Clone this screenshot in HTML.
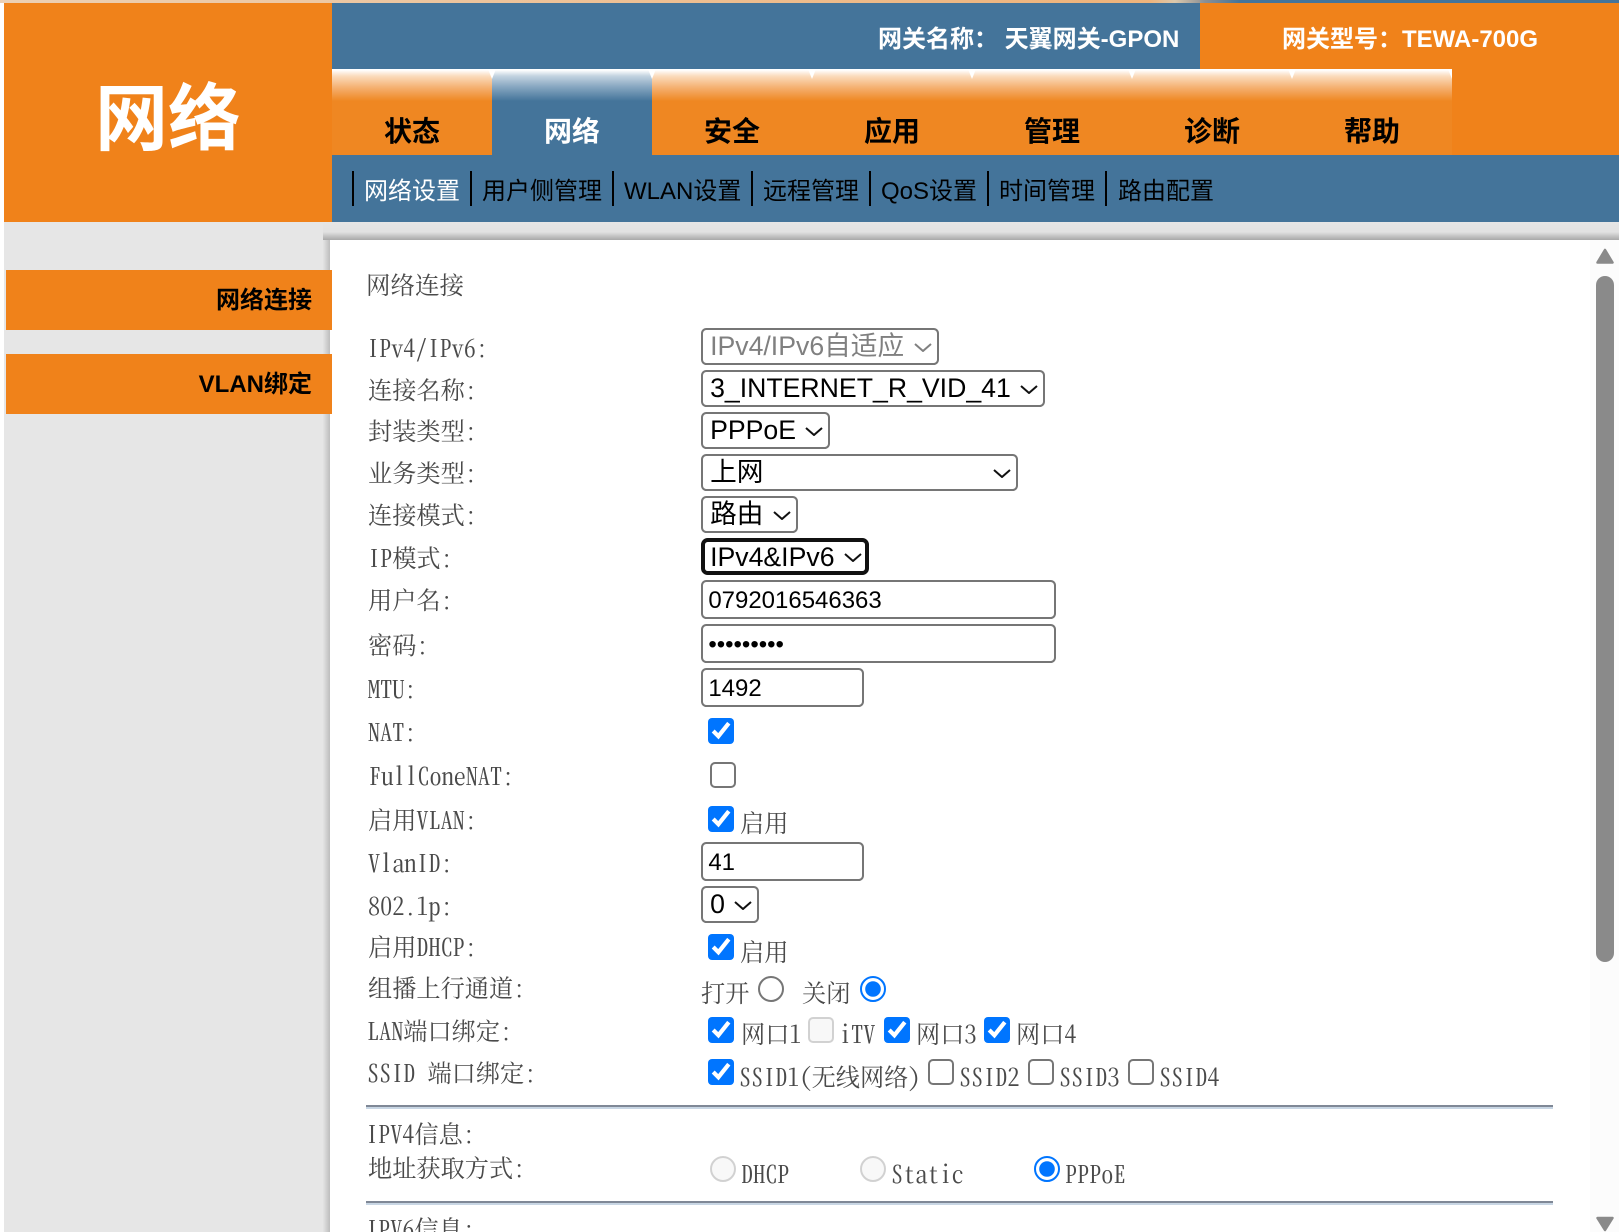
<!DOCTYPE html>
<html lang="zh"><head><meta charset="utf-8"><title>网络连接</title>
<style>
html,body{margin:0;padding:0;background:#fff;width:1619px;height:1232px;overflow:hidden}
#p{width:1619px;height:1232px;position:relative;overflow:hidden;font-family:"Liberation Sans","Noto Sans CJK SC",sans-serif}
.a{position:absolute}
.t{position:absolute;white-space:pre;line-height:30px}
.h{font-weight:700;font-size:24px;color:#fff}
.tab{position:absolute;top:69px;width:160px;height:86px;background:linear-gradient(#fff 0,#fff 1px,#fbdcbd 7px,#f5b274 18px,#ef8722 32px,#ef8722 100%);text-align:center;font-weight:700;font-size:28px;line-height:40px;color:#000}
.tab span{position:absolute;left:0;right:0;top:43px}
.n{position:absolute;top:69px}
.sep{position:absolute;top:171px;height:35px;width:2px;background:#000}
.sub{font-size:24px;color:#000}
.side{position:absolute;left:6px;width:326px;height:60px;background:#f0821a;color:#000;font-weight:700;font-size:24px;text-align:right;box-sizing:border-box;padding-right:20px;line-height:62px}
.l{position:absolute;white-space:pre;line-height:30px;font-family:"Noto Serif CJK SC",serif;font-feature-settings:"hwid";font-size:24.2px;color:#4a4a4a}
.f{position:absolute;left:701px}
select,input[type=text],input[type=password]{zoom:1.3333;display:block;margin:0;box-sizing:border-box;background:#fff;color:#000;border:1.6px solid #767676;border-radius:4px;font-family:"Liberation Sans","Noto Sans CJK SC",sans-serif;outline:0}
select{-webkit-appearance:none;appearance:none;font-size:20px;height:27.75px;padding:0 0 0 5.3px}
input[type=text],input[type=password]{font-size:18px;height:29.25px;padding:2px 4px 0 4px}
.ch{position:absolute;right:7px;top:15px;pointer-events:none}
.c{position:absolute;margin:0;zoom:2}
</style></head><body><div id="p">

<div class="a" style="left:0;top:0;width:1619px;height:3px;background:linear-gradient(90deg,#ecd0b4 0,#efb47c 1100px,#efb47c 1150px,#dcc8ac 1175px,#8b8f94 1205px,#44749a 1240px,#44749a 100%)"></div>
<div class="a" style="left:4px;top:3px;width:328px;height:219px;background:#f0821a"></div>
<div class="a" style="left:332px;top:3px;width:868px;height:66px;background:#44749a"></div>
<div class="a" style="left:1200px;top:3px;width:419px;height:152px;background:#f0821a"></div>
<div class="a" style="left:332px;top:155px;width:1287px;height:67px;background:#44749a"></div>
<div class="t" style="left:95px;top:77px;font-size:73px;line-height:86px;font-weight:700;color:#fff">网络</div>
<div class="t h" style="left:878px;top:25px">网关名称&#xFF1A; 天翼网关-GPON</div>
<div class="t h" style="left:1282px;top:25px">网关型号&#xFF1A;TEWA-700G</div>

<div class="tab" style="left:332px"><span>状态</span></div>
<div class="tab" style="left:492px;background:linear-gradient(#fff 0,#fff 1px,#c3d3e0 7px,#86a6c0 18px,#44749a 32px,#44749a 100%);color:#fff"><span>网络</span></div>
<div class="tab" style="left:652px"><span>安全</span></div>
<div class="tab" style="left:812px"><span>应用</span></div>
<div class="tab" style="left:972px"><span>管理</span></div>
<div class="tab" style="left:1132px"><span>诊断</span></div>
<div class="tab" style="left:1292px"><span>帮助</span></div>
<svg class="n" style="left:488px" width="8" height="10"><path d="M0 0H8L4 10Z" fill="#fff"/></svg>
<svg class="n" style="left:648px" width="8" height="10"><path d="M0 0H8L4 10Z" fill="#fff"/></svg>
<svg class="n" style="left:808px" width="8" height="10"><path d="M0 0H8L4 10Z" fill="#fff"/></svg>
<svg class="n" style="left:968px" width="8" height="10"><path d="M0 0H8L4 10Z" fill="#fff"/></svg>
<svg class="n" style="left:1128px" width="8" height="10"><path d="M0 0H8L4 10Z" fill="#fff"/></svg>
<svg class="n" style="left:1288px" width="8" height="10"><path d="M0 0H8L4 10Z" fill="#fff"/></svg>
<svg class="n" style="left:1448px" width="4" height="10"><path d="M0 0H4V10Z" fill="#fff"/></svg>

<div class="sep" style="left:352px"></div><div class="sep" style="left:470px"></div><div class="sep" style="left:612px"></div><div class="sep" style="left:751px"></div><div class="sep" style="left:869px"></div><div class="sep" style="left:987px"></div><div class="sep" style="left:1105px"></div>
<div class="t sub" style="left:364px;top:177px;color:#fff">网络设置</div>
<div class="t sub" style="left:482px;top:177px">用户侧管理</div>
<div class="t sub" style="left:624px;top:177px">WLAN设置</div>
<div class="t sub" style="left:763px;top:177px">远程管理</div>
<div class="t sub" style="left:881px;top:177px">QoS设置</div>
<div class="t sub" style="left:999px;top:177px">时间管理</div>
<div class="t sub" style="left:1118px;top:177px">路由配置</div>

<div class="a" style="left:4px;top:222px;width:319px;height:1010px;background:#e6e6e6"></div>
<div class="a" style="left:323px;top:240px;width:7px;height:992px;background:linear-gradient(90deg,#e4e4e4,#bdbdbd)"></div>
<div class="a" style="left:323px;top:222px;width:1296px;height:18px;background:linear-gradient(#e6e6e6 0,#e2e2e2 55%,#a8a8a8 100%)"></div>
<div class="side" style="top:270px">网络连接</div>
<div class="side" style="top:354px">VLAN绑定</div>

<div class="a" style="left:1590px;top:240px;width:29px;height:992px;background:#fcfcfc"></div>
<svg class="a" style="left:1596px;top:248px" width="18" height="16"><path d="M9 2 L16.5 14.5 H1.5 Z" fill="#8a8a8a" stroke="#8a8a8a" stroke-width="2.5" stroke-linejoin="round"/></svg>
<div class="a" style="left:1596px;top:276px;width:18px;height:686px;background:#8a8a8a;border-radius:9px"></div>
<svg class="a" style="left:1596px;top:1216px" width="18" height="16"><path d="M1.5 2 H16.5 L9 14 Z" fill="#8a8a8a" stroke="#8a8a8a" stroke-width="2.5" stroke-linejoin="round"/></svg>

<div class="l" style="left:366px;top:270px;font-size:24.5px">网络连接</div>
<div class="l" style="left:367px;top:332px">IPv4/IPv6:</div>
<div class="l" style="left:368px;top:374px">连接名称:</div>
<div class="l" style="left:368px;top:415px">封装类型:</div>
<div class="l" style="left:368px;top:457px">业务类型:</div>
<div class="l" style="left:368px;top:499px">连接模式:</div>
<div class="l" style="left:368px;top:542px">IP模式:</div>
<div class="l" style="left:368px;top:584px">用户名:</div>
<div class="l" style="left:368px;top:629px">密码:</div>
<div class="l" style="left:368px;top:673px">MTU:</div>
<div class="l" style="left:368px;top:716px">NAT:</div>
<div class="l" style="left:369px;top:760px">FullConeNAT:</div>
<div class="l" style="left:368px;top:804px">启用VLAN:</div>
<div class="l" style="left:368px;top:847px">VlanID:</div>
<div class="l" style="left:368px;top:890px">802.1p:</div>
<div class="l" style="left:368px;top:931px">启用DHCP:</div>
<div class="l" style="left:368px;top:972px">组播上行通道:</div>
<div class="l" style="left:367px;top:1015px">LAN端口绑定:</div>
<div class="l" style="left:367px;top:1057px">SSID 端口绑定:</div>
<div class="l" style="left:366px;top:1118px">IPV4信息:</div>
<div class="l" style="left:368px;top:1152px">地址获取方式:</div>
<div class="l" style="left:366px;top:1213px">IPV6信息:</div>

<div class="f" style="top:328px"><select disabled style="width:178.5px;color:#808080;background:#fff;opacity:1"><option>IPv4/IPv6自适应</option></select><svg class="ch" width="18" height="9"><path d="M1 1 L9 8 L17 1" fill="none" stroke="#808080" stroke-width="2"/></svg></div>
<div class="f" style="top:370px"><select style="width:258px"><option>3_INTERNET_R_VID_41</option></select><svg class="ch" width="18" height="9"><path d="M1 1 L9 8 L17 1" fill="none" stroke="#111" stroke-width="2"/></svg></div>
<div class="f" style="top:412px"><select style="width:96.7px"><option>PPPoE</option></select><svg class="ch" width="18" height="9"><path d="M1 1 L9 8 L17 1" fill="none" stroke="#111" stroke-width="2"/></svg></div>
<div class="f" style="top:454px"><select style="width:238px"><option>上网</option></select><svg class="ch" width="18" height="9"><path d="M1 1 L9 8 L17 1" fill="none" stroke="#111" stroke-width="2"/></svg></div>
<div class="f" style="top:496px"><select style="width:72.7px"><option>路由</option></select><svg class="ch" width="18" height="9"><path d="M1 1 L9 8 L17 1" fill="none" stroke="#111" stroke-width="2"/></svg></div>
<div class="f" style="top:538px"><select style="width:126px;border:3.1px solid #111;border-radius:5px;padding-left:3.8px"><option>IPv4&amp;IPv6</option></select><svg class="ch" width="18" height="9"><path d="M1 1 L9 8 L17 1" fill="none" stroke="#111" stroke-width="2"/></svg></div>
<div class="f" style="top:580px"><input type="text" value="0792016546363" style="width:266px"></div>
<div class="f" style="top:624px"><input type="password" value="123456789" style="width:266px"></div>
<div class="f" style="top:668px"><input type="text" value="1492" style="width:122px"></div>
<div class="f" style="top:842px"><input type="text" value="41" style="width:122px"></div>
<div class="f" style="top:886px"><select style="width:43.5px"><option>0</option></select><svg class="ch" width="18" height="9"><path d="M1 1 L9 8 L17 1" fill="none" stroke="#111" stroke-width="2"/></svg></div>

<input class="c" type="checkbox" checked style="left:354px;top:359px">
<input class="c" type="checkbox" style="left:355px;top:381px">
<input class="c" type="checkbox" checked style="left:354px;top:403px">
<div class="l" style="left:740px;top:807px">启用</div>
<input class="c" type="checkbox" checked style="left:354px;top:467px">
<div class="l" style="left:740px;top:936px">启用</div>

<div class="l" style="left:701px;top:977px">打开</div>
<input class="c" type="radio" name="g" style="left:379px;top:488px">
<div class="l" style="left:802px;top:977px">关闭</div>
<input class="c" type="radio" name="g" checked style="left:430px;top:488px">

<input class="c" type="checkbox" checked style="left:354px;top:508.5px">
<div class="l" style="left:741px;top:1018px">网口1</div>
<input class="c" type="checkbox" disabled style="left:404px;top:508.5px">
<div class="l" style="left:839px;top:1018px">iTV</div>
<input class="c" type="checkbox" checked style="left:442px;top:508.5px">
<div class="l" style="left:916px;top:1018px">网口3</div>
<input class="c" type="checkbox" checked style="left:492px;top:508.5px">
<div class="l" style="left:1016px;top:1018px">网口4</div>

<input class="c" type="checkbox" checked style="left:354px;top:529.5px">
<div class="l" style="left:739px;top:1061px">SSID1(无线网络)</div>
<input class="c" type="checkbox" style="left:464px;top:529.5px">
<div class="l" style="left:959px;top:1061px">SSID2</div>
<input class="c" type="checkbox" style="left:514px;top:529.5px">
<div class="l" style="left:1059px;top:1061px">SSID3</div>
<input class="c" type="checkbox" style="left:564px;top:529.5px">
<div class="l" style="left:1159px;top:1061px">SSID4</div>

<div class="a" style="left:366px;top:1105px;width:1187px;height:2px;background:#7f8896"></div>
<div class="a" style="left:366px;top:1107px;width:1187px;height:2px;background:#c8d6e4"></div>

<input class="c" type="radio" name="h" disabled style="left:355px;top:578px">
<div class="l" style="left:741px;top:1158px">DHCP</div>
<input class="c" type="radio" name="h" disabled style="left:430px;top:578px">
<div class="l" style="left:891px;top:1158px">Static</div>
<input class="c" type="radio" name="h" checked style="left:517px;top:578px">
<div class="l" style="left:1065px;top:1158px">PPPoE</div>

<div class="a" style="left:366px;top:1201px;width:1187px;height:2px;background:#7f8896"></div>
<div class="a" style="left:366px;top:1203px;width:1187px;height:2px;background:#c8d6e4"></div>

</div></body></html>
